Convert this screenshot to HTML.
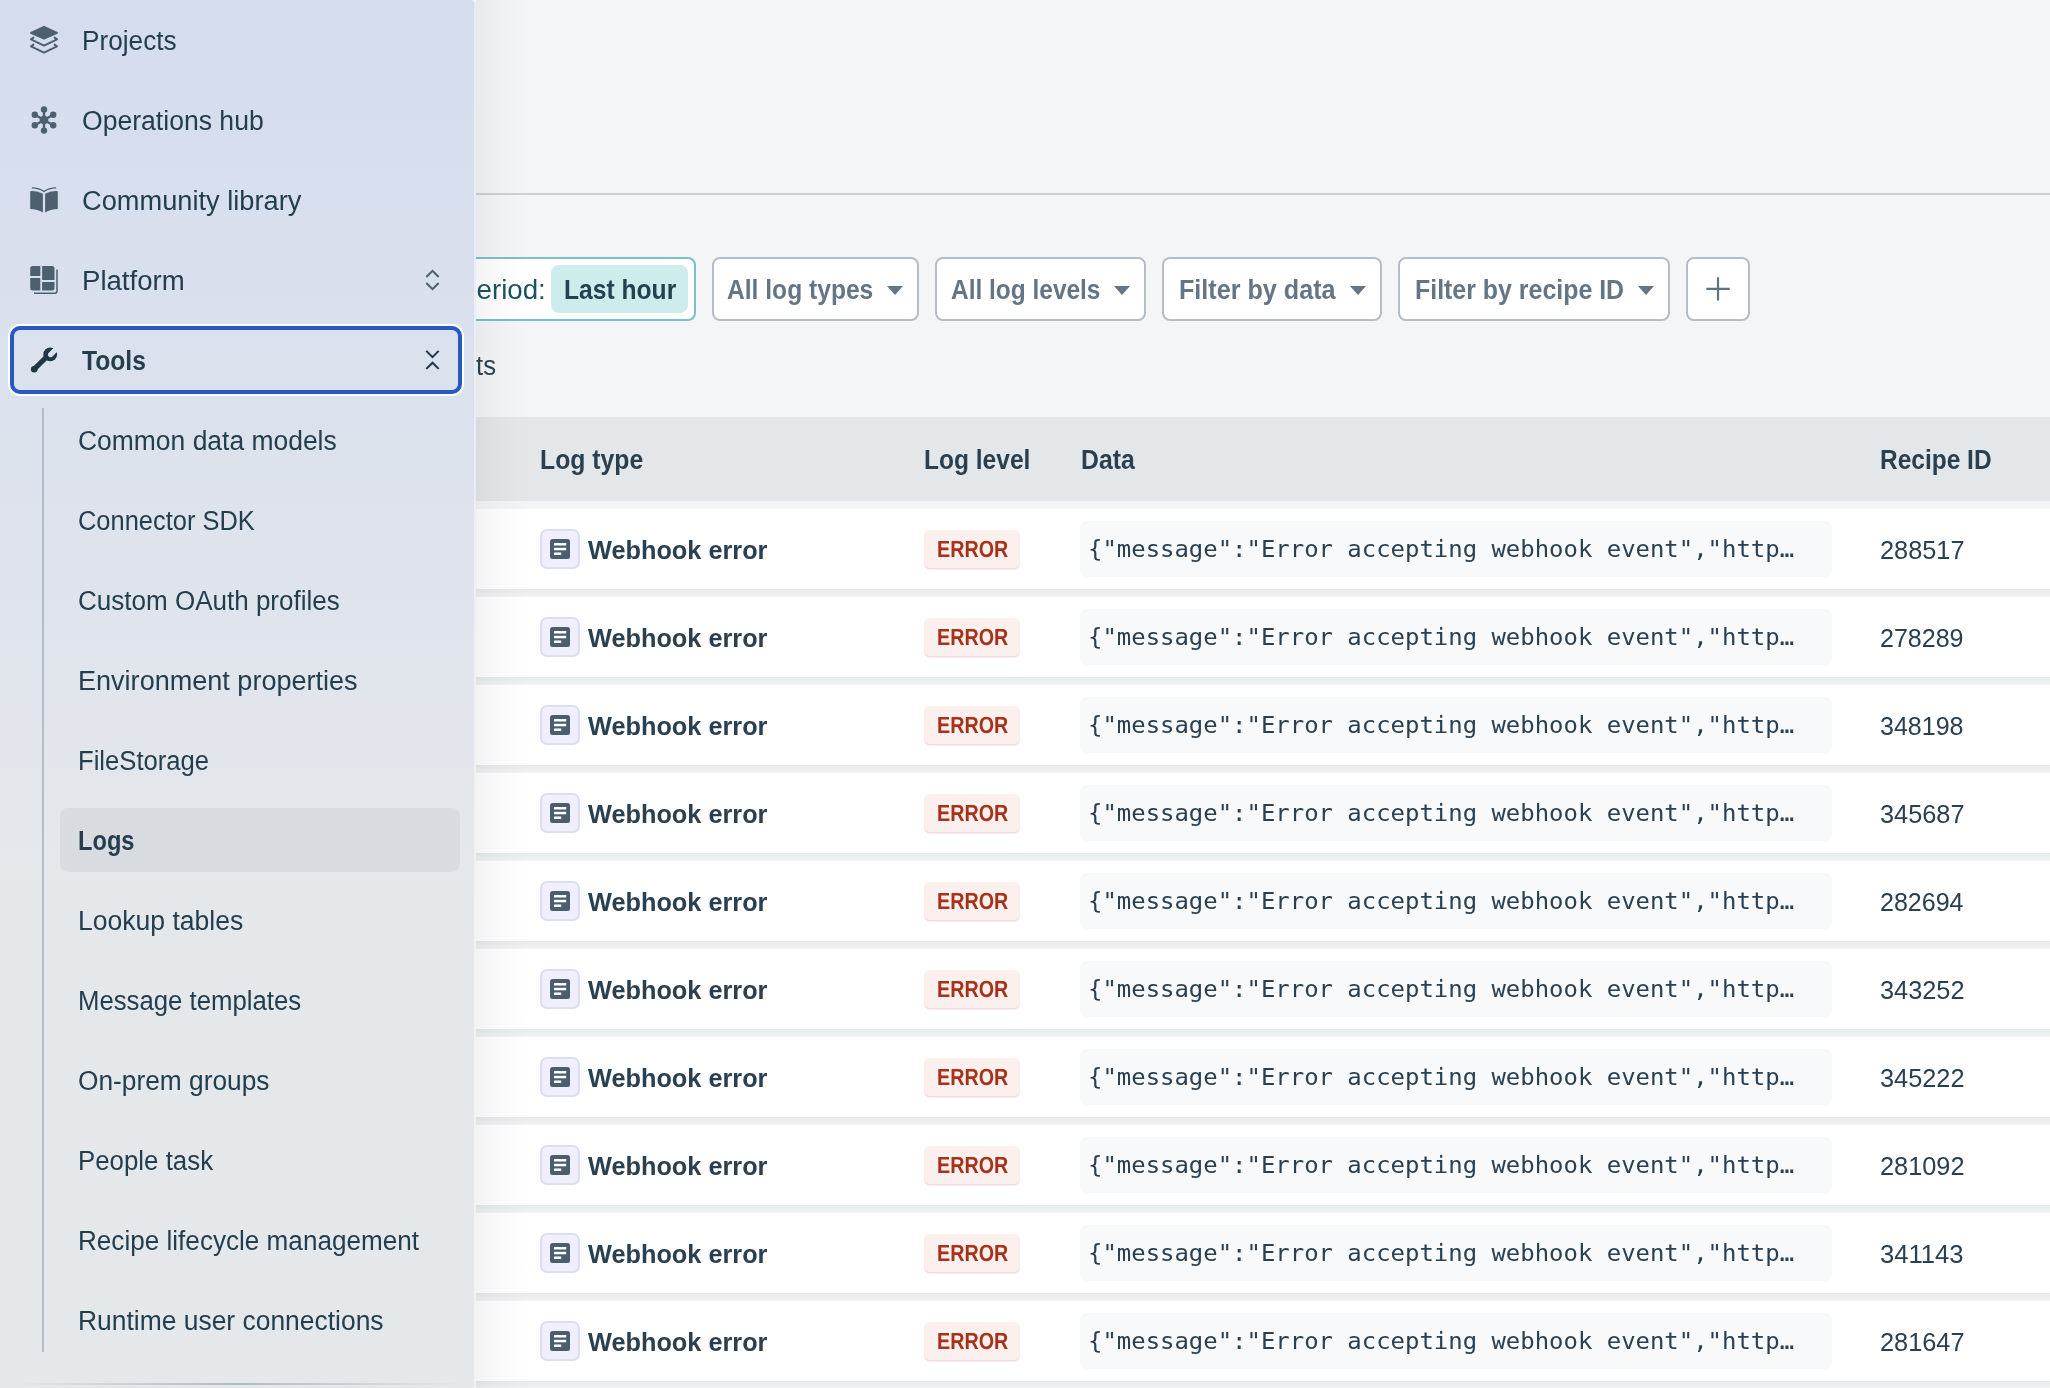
<!DOCTYPE html>
<html lang="en">
<head>
<meta charset="utf-8">
<title>Logs</title>
<style>
*{box-sizing:border-box}
html,body{margin:0;padding:0}
body{width:2050px;height:1388px;overflow:hidden;position:relative;background:#f4f5f7;font-family:'Liberation Sans',sans-serif}
.t{position:absolute;line-height:1;white-space:pre;transform-origin:0 0;display:block}
#main{position:absolute;left:0;top:0;width:2050px;height:1388px;overflow:hidden}
#hline{position:absolute;left:476px;top:193px;width:1574px;height:2px;background:#cbd1d7}
.box{position:absolute;top:257px;height:64px;border:2px solid #b4bec8;border-radius:8px;background:#fff}
#period{left:300px;width:396px;border-color:#7bc1c6}
#chip{position:absolute;left:551px;top:265px;width:137px;height:48px;border-radius:8px;background:#cdecec}
.caret{position:absolute;top:286px;width:0;height:0;border-left:8.5px solid transparent;border-right:8.5px solid transparent;border-top:9px solid #647686}
#thead{position:absolute;left:476px;top:417px;width:1574px;height:84px;background:#e4e7ea;border-bottom:1px solid #e1e5e8}
.row{position:absolute;left:476px;width:1574px;height:80px;background:#fff}
.row:after{content:"";position:absolute;left:0;top:80px;width:100%;height:8px;background:linear-gradient(#e7eaeb,#f1f3f4)}
.ib{position:absolute;left:64px;top:20px;width:40px;height:40px;border:2px solid #dddef2;border-radius:7px;background:#efeffd}
.ib svg{position:absolute;left:8px;top:8px}
.badge{position:absolute;left:448px;top:21px;width:96px;height:38px;border-radius:6px;background:#fcf0ee;box-shadow:0 1.5px 0 #efdddb}
.code{position:absolute;left:604px;top:12px;width:752px;height:56px;border-radius:8px;background:#f7f9fb}
#shade{position:absolute;left:476px;top:0;width:56px;height:1388px;background:linear-gradient(to right,rgba(25,35,30,.055) 0,rgba(25,35,30,.04) 10px,rgba(25,35,30,.02) 26px,rgba(25,35,30,.006) 42px,rgba(25,35,30,0) 56px)}
#sidebar{position:absolute;left:0;top:0;width:476px;height:1388px;background:linear-gradient(180deg,#d4dcee 0,#e5e8eb 900px);border-right:2px solid rgba(255,255,255,.42);border-top-right-radius:5px;overflow:hidden}
#focus{position:absolute;left:10px;top:326px;width:452px;height:68px;border:4px solid #2759c4;border-radius:10px;box-shadow:0 0 0 2px #fff}
#vline{position:absolute;left:42px;top:408px;width:2px;height:944px;background:#b3bcc8}
#logsel{position:absolute;left:60px;top:808px;width:400px;height:64px;border-radius:8px;background:#d8dbe0}
#bline{position:absolute;left:10px;top:1383px;width:454px;height:2px;background:linear-gradient(to right,rgba(176,186,196,0),rgba(176,186,196,1) 50%,rgba(176,186,196,0))}
#icons{position:absolute;left:0;top:0}
</style>
</head>
<body>
<div id="main">
<div id="hline"></div>
<div class="box" id="period"></div>
<div id="chip"></div>
<div class="box" style="left:712px;width:207px"></div><div class="caret" style="left:886.5px"></div>
<div class="box" style="left:935px;width:211px"></div><div class="caret" style="left:1113.5px"></div>
<div class="box" style="left:1162px;width:220px"></div><div class="caret" style="left:1349.5px"></div>
<div class="box" style="left:1398px;width:272px"></div><div class="caret" style="left:1637.5px"></div>
<div class="box" style="left:1686px;width:64px"><svg width="60" height="60" viewBox="0 0 60 60" style="position:absolute;left:0;top:0"><path d="M30 18.2V41.6M18.3 29.9H41.7" stroke="#5f7282" stroke-width="2.2" fill="none"/></svg></div>
<div id="thead"></div>
<div class="row" style="top:509px"><div class="ib"><svg width="20" height="20" viewBox="0 0 20 20"><rect width="20" height="20" rx="2.5" fill="#4b5e70"/><rect x="4" y="4" width="12.2" height="2.5" fill="#fff"/><rect x="4" y="8.8" width="12.2" height="2.5" fill="#fff"/><rect x="4" y="13.5" width="7.2" height="2.5" fill="#fff"/></svg></div><div class="badge"></div><div class="code"></div></div>
<div class="row" style="top:597px"><div class="ib"><svg width="20" height="20" viewBox="0 0 20 20"><rect width="20" height="20" rx="2.5" fill="#4b5e70"/><rect x="4" y="4" width="12.2" height="2.5" fill="#fff"/><rect x="4" y="8.8" width="12.2" height="2.5" fill="#fff"/><rect x="4" y="13.5" width="7.2" height="2.5" fill="#fff"/></svg></div><div class="badge"></div><div class="code"></div></div>
<div class="row" style="top:685px"><div class="ib"><svg width="20" height="20" viewBox="0 0 20 20"><rect width="20" height="20" rx="2.5" fill="#4b5e70"/><rect x="4" y="4" width="12.2" height="2.5" fill="#fff"/><rect x="4" y="8.8" width="12.2" height="2.5" fill="#fff"/><rect x="4" y="13.5" width="7.2" height="2.5" fill="#fff"/></svg></div><div class="badge"></div><div class="code"></div></div>
<div class="row" style="top:773px"><div class="ib"><svg width="20" height="20" viewBox="0 0 20 20"><rect width="20" height="20" rx="2.5" fill="#4b5e70"/><rect x="4" y="4" width="12.2" height="2.5" fill="#fff"/><rect x="4" y="8.8" width="12.2" height="2.5" fill="#fff"/><rect x="4" y="13.5" width="7.2" height="2.5" fill="#fff"/></svg></div><div class="badge"></div><div class="code"></div></div>
<div class="row" style="top:861px"><div class="ib"><svg width="20" height="20" viewBox="0 0 20 20"><rect width="20" height="20" rx="2.5" fill="#4b5e70"/><rect x="4" y="4" width="12.2" height="2.5" fill="#fff"/><rect x="4" y="8.8" width="12.2" height="2.5" fill="#fff"/><rect x="4" y="13.5" width="7.2" height="2.5" fill="#fff"/></svg></div><div class="badge"></div><div class="code"></div></div>
<div class="row" style="top:949px"><div class="ib"><svg width="20" height="20" viewBox="0 0 20 20"><rect width="20" height="20" rx="2.5" fill="#4b5e70"/><rect x="4" y="4" width="12.2" height="2.5" fill="#fff"/><rect x="4" y="8.8" width="12.2" height="2.5" fill="#fff"/><rect x="4" y="13.5" width="7.2" height="2.5" fill="#fff"/></svg></div><div class="badge"></div><div class="code"></div></div>
<div class="row" style="top:1037px"><div class="ib"><svg width="20" height="20" viewBox="0 0 20 20"><rect width="20" height="20" rx="2.5" fill="#4b5e70"/><rect x="4" y="4" width="12.2" height="2.5" fill="#fff"/><rect x="4" y="8.8" width="12.2" height="2.5" fill="#fff"/><rect x="4" y="13.5" width="7.2" height="2.5" fill="#fff"/></svg></div><div class="badge"></div><div class="code"></div></div>
<div class="row" style="top:1125px"><div class="ib"><svg width="20" height="20" viewBox="0 0 20 20"><rect width="20" height="20" rx="2.5" fill="#4b5e70"/><rect x="4" y="4" width="12.2" height="2.5" fill="#fff"/><rect x="4" y="8.8" width="12.2" height="2.5" fill="#fff"/><rect x="4" y="13.5" width="7.2" height="2.5" fill="#fff"/></svg></div><div class="badge"></div><div class="code"></div></div>
<div class="row" style="top:1213px"><div class="ib"><svg width="20" height="20" viewBox="0 0 20 20"><rect width="20" height="20" rx="2.5" fill="#4b5e70"/><rect x="4" y="4" width="12.2" height="2.5" fill="#fff"/><rect x="4" y="8.8" width="12.2" height="2.5" fill="#fff"/><rect x="4" y="13.5" width="7.2" height="2.5" fill="#fff"/></svg></div><div class="badge"></div><div class="code"></div></div>
<div class="row" style="top:1301px"><div class="ib"><svg width="20" height="20" viewBox="0 0 20 20"><rect width="20" height="20" rx="2.5" fill="#4b5e70"/><rect x="4" y="4" width="12.2" height="2.5" fill="#fff"/><rect x="4" y="8.8" width="12.2" height="2.5" fill="#fff"/><rect x="4" y="13.5" width="7.2" height="2.5" fill="#fff"/></svg></div><div class="badge"></div><div class="code"></div></div>
<span class="t" style="left:458.10px;top:277px;font-size:27px;color:#1b5360;transform:scaleX(1.0266)">Period:</span>
<span class="t" style="left:563.78px;top:277px;font-size:27px;color:#25404f;transform:scaleX(0.9124);font-weight:700">Last hour</span>
<span class="t" style="left:726.69px;top:277px;font-size:27px;color:#647686;transform:scaleX(0.9114);font-weight:700">All log types</span>
<span class="t" style="left:950.99px;top:277px;font-size:27px;color:#647686;transform:scaleX(0.9055);font-weight:700">All log levels</span>
<span class="t" style="left:1179.14px;top:277px;font-size:27px;color:#647686;transform:scaleX(0.9313);font-weight:700">Filter by data</span>
<span class="t" style="left:1414.75px;top:277px;font-size:27px;color:#647686;transform:scaleX(0.9229);font-weight:700">Filter by recipe ID</span>
<span class="t" style="left:476.20px;top:353px;font-size:27px;color:#2a4352;transform:scaleX(0.9500)">ts</span>
<span class="t" style="left:540.37px;top:447px;font-size:27px;color:#2a4050;transform:scaleX(0.9173);font-weight:700">Log type</span>
<span class="t" style="left:924.48px;top:447px;font-size:27px;color:#2a4050;transform:scaleX(0.9088);font-weight:700">Log level</span>
<span class="t" style="left:1080.56px;top:447px;font-size:27px;color:#2a4050;transform:scaleX(0.9175);font-weight:700">Data</span>
<span class="t" style="left:1880.39px;top:447px;font-size:27px;color:#2a4050;transform:scaleX(0.9067);font-weight:700">Recipe ID</span>
<span class="t" style="left:587.90px;top:537px;font-size:26px;color:#2a4050;transform:scaleX(0.9728);font-weight:700">Webhook error</span>
<span class="t" style="left:937.21px;top:538px;font-size:23.4px;color:#a8311a;transform:scaleX(0.8439);text-rendering:geometricPrecision;font-weight:700">ERROR</span>
<span class="t" style="left:1087.68px;top:538px;font-size:23px;color:#2a4050;transform:scaleX(1.0406);font-family:'DejaVu Sans Mono','Liberation Mono',monospace">{"message":"Error accepting webhook event","http…</span>
<span class="t" style="left:1879.63px;top:537px;font-size:26px;color:#2a4050;transform:scaleX(0.9738)">288517</span>
<span class="t" style="left:587.90px;top:625px;font-size:26px;color:#2a4050;transform:scaleX(0.9728);font-weight:700">Webhook error</span>
<span class="t" style="left:937.21px;top:626px;font-size:23.4px;color:#a8311a;transform:scaleX(0.8439);text-rendering:geometricPrecision;font-weight:700">ERROR</span>
<span class="t" style="left:1087.68px;top:626px;font-size:23px;color:#2a4050;transform:scaleX(1.0406);font-family:'DejaVu Sans Mono','Liberation Mono',monospace">{"message":"Error accepting webhook event","http…</span>
<span class="t" style="left:1879.64px;top:625px;font-size:26px;color:#2a4050;transform:scaleX(0.9624)">278289</span>
<span class="t" style="left:587.90px;top:713px;font-size:26px;color:#2a4050;transform:scaleX(0.9728);font-weight:700">Webhook error</span>
<span class="t" style="left:937.21px;top:714px;font-size:23.4px;color:#a8311a;transform:scaleX(0.8439);text-rendering:geometricPrecision;font-weight:700">ERROR</span>
<span class="t" style="left:1087.68px;top:714px;font-size:23px;color:#2a4050;transform:scaleX(1.0406);font-family:'DejaVu Sans Mono','Liberation Mono',monospace">{"message":"Error accepting webhook event","http…</span>
<span class="t" style="left:1879.64px;top:713px;font-size:26px;color:#2a4050;transform:scaleX(0.9624)">348198</span>
<span class="t" style="left:587.90px;top:801px;font-size:26px;color:#2a4050;transform:scaleX(0.9728);font-weight:700">Webhook error</span>
<span class="t" style="left:937.21px;top:802px;font-size:23.4px;color:#a8311a;transform:scaleX(0.8439);text-rendering:geometricPrecision;font-weight:700">ERROR</span>
<span class="t" style="left:1087.68px;top:802px;font-size:23px;color:#2a4050;transform:scaleX(1.0406);font-family:'DejaVu Sans Mono','Liberation Mono',monospace">{"message":"Error accepting webhook event","http…</span>
<span class="t" style="left:1879.63px;top:801px;font-size:26px;color:#2a4050;transform:scaleX(0.9738)">345687</span>
<span class="t" style="left:587.90px;top:889px;font-size:26px;color:#2a4050;transform:scaleX(0.9728);font-weight:700">Webhook error</span>
<span class="t" style="left:937.21px;top:890px;font-size:23.4px;color:#a8311a;transform:scaleX(0.8439);text-rendering:geometricPrecision;font-weight:700">ERROR</span>
<span class="t" style="left:1087.68px;top:890px;font-size:23px;color:#2a4050;transform:scaleX(1.0406);font-family:'DejaVu Sans Mono','Liberation Mono',monospace">{"message":"Error accepting webhook event","http…</span>
<span class="t" style="left:1879.64px;top:889px;font-size:26px;color:#2a4050;transform:scaleX(0.9624)">282694</span>
<span class="t" style="left:587.90px;top:977px;font-size:26px;color:#2a4050;transform:scaleX(0.9728);font-weight:700">Webhook error</span>
<span class="t" style="left:937.21px;top:978px;font-size:23.4px;color:#a8311a;transform:scaleX(0.8439);text-rendering:geometricPrecision;font-weight:700">ERROR</span>
<span class="t" style="left:1087.68px;top:978px;font-size:23px;color:#2a4050;transform:scaleX(1.0406);font-family:'DejaVu Sans Mono','Liberation Mono',monospace">{"message":"Error accepting webhook event","http…</span>
<span class="t" style="left:1879.63px;top:977px;font-size:26px;color:#2a4050;transform:scaleX(0.9738)">343252</span>
<span class="t" style="left:587.90px;top:1065px;font-size:26px;color:#2a4050;transform:scaleX(0.9728);font-weight:700">Webhook error</span>
<span class="t" style="left:937.21px;top:1066px;font-size:23.4px;color:#a8311a;transform:scaleX(0.8439);text-rendering:geometricPrecision;font-weight:700">ERROR</span>
<span class="t" style="left:1087.68px;top:1066px;font-size:23px;color:#2a4050;transform:scaleX(1.0406);font-family:'DejaVu Sans Mono','Liberation Mono',monospace">{"message":"Error accepting webhook event","http…</span>
<span class="t" style="left:1879.63px;top:1065px;font-size:26px;color:#2a4050;transform:scaleX(0.9738)">345222</span>
<span class="t" style="left:587.90px;top:1153px;font-size:26px;color:#2a4050;transform:scaleX(0.9728);font-weight:700">Webhook error</span>
<span class="t" style="left:937.21px;top:1154px;font-size:23.4px;color:#a8311a;transform:scaleX(0.8439);text-rendering:geometricPrecision;font-weight:700">ERROR</span>
<span class="t" style="left:1087.68px;top:1154px;font-size:23px;color:#2a4050;transform:scaleX(1.0406);font-family:'DejaVu Sans Mono','Liberation Mono',monospace">{"message":"Error accepting webhook event","http…</span>
<span class="t" style="left:1879.63px;top:1153px;font-size:26px;color:#2a4050;transform:scaleX(0.9738)">281092</span>
<span class="t" style="left:587.90px;top:1241px;font-size:26px;color:#2a4050;transform:scaleX(0.9728);font-weight:700">Webhook error</span>
<span class="t" style="left:937.21px;top:1242px;font-size:23.4px;color:#a8311a;transform:scaleX(0.8439);text-rendering:geometricPrecision;font-weight:700">ERROR</span>
<span class="t" style="left:1087.68px;top:1242px;font-size:23px;color:#2a4050;transform:scaleX(1.0406);font-family:'DejaVu Sans Mono','Liberation Mono',monospace">{"message":"Error accepting webhook event","http…</span>
<span class="t" style="left:1879.61px;top:1241px;font-size:26px;color:#2a4050;transform:scaleX(0.9855)">341143</span>
<span class="t" style="left:587.90px;top:1329px;font-size:26px;color:#2a4050;transform:scaleX(0.9728);font-weight:700">Webhook error</span>
<span class="t" style="left:937.21px;top:1330px;font-size:23.4px;color:#a8311a;transform:scaleX(0.8439);text-rendering:geometricPrecision;font-weight:700">ERROR</span>
<span class="t" style="left:1087.68px;top:1330px;font-size:23px;color:#2a4050;transform:scaleX(1.0406);font-family:'DejaVu Sans Mono','Liberation Mono',monospace">{"message":"Error accepting webhook event","http…</span>
<span class="t" style="left:1879.63px;top:1329px;font-size:26px;color:#2a4050;transform:scaleX(0.9738)">281647</span>

<div id="shade"></div>
</div>
<div id="sidebar">
<div id="focus"></div>
<div id="vline"></div>
<div id="logsel"></div>
<div id="bline"></div>
<svg id="icons" width="474" height="420" viewBox="0 0 474 420">
<!-- projects -->
<g fill="none" stroke="#4c6070" stroke-linejoin="round" stroke-linecap="round">
<path d="M44 27 L57 32.8 L44 38.6 L31 32.8 Z" fill="#4c6070" stroke-width="2"/>
<path d="M33.4 37.6 L31 39.4 L44 45.6 L57 39.4 L54.6 37.6" stroke-width="2"/>
<path d="M33.4 44.6 L31 46.4 L44 52.6 L57 46.4 L54.6 44.6" stroke-width="2"/>
</g>
<!-- operations hub -->
<g fill="#4c6070" stroke="#4c6070" stroke-width="2">
<path d="M44 109.5V130.5M34.9 114.75L53.1 125.25M34.9 125.25L53.1 114.75" fill="none" stroke-width="2.4"/>
<circle cx="44" cy="120" r="4.4" stroke="none"/>
<circle cx="44" cy="109.4" r="3.2" stroke="none"/><circle cx="44" cy="130.6" r="3.2" stroke="none"/>
<circle cx="34.8" cy="114.7" r="3.2" stroke="none"/><circle cx="53.2" cy="114.7" r="3.2" stroke="none"/>
<circle cx="34.8" cy="125.3" r="3.2" stroke="none"/><circle cx="53.2" cy="125.3" r="3.2" stroke="none"/>
</g>
<!-- community library -->
<g fill="#4c6070">
<path d="M30.2 191.2 Q37.5 190.6 42.9 193.8 V212.6 Q37.5 209.2 30.2 209 Z"/>
<path d="M57.8 191.2 Q50.5 190.6 45.1 193.8 V212.6 Q50.5 209.2 57.8 209 Z"/>
<path d="M31.8 187.8 Q39.5 187.8 44 191.6 Q48.5 187.8 56.2 187.8" fill="none" stroke="#4c6070" stroke-width="1.3"/>
</g>
<!-- platform -->
<g fill="#4c6070">
<path d="M32.7 266 H40.3 V276 H30.2 V268.5 Q30.2 266 32.7 266 Z"/>
<path d="M42.1 266 H52 Q54.5 266 54.5 268.5 V280 H42.1 Z"/>
<path d="M30.2 278 H40.3 V290.6 H32.7 Q30.2 290.6 30.2 288.1 Z"/>
<path d="M42.1 282 H54.5 V288.1 Q54.5 290.6 52 290.6 H42.1 Z"/>
<path d="M57 269.6 V291 Q57 293.2 54.8 293.2 H34" fill="none" stroke="#4c6070" stroke-width="1.5"/>
</g>
<!-- chevrons platform -->
<g fill="none" stroke="#4b5e6c" stroke-width="2">
<path d="M426.3 277 L432.5 270.8 L438.7 277"/>
<path d="M426.3 283 L432.5 289.2 L438.7 283"/>
</g>
<!-- wrench -->
<defs><mask id="wm"><rect x="20" y="340" width="50" height="40" fill="#fff"/><path d="M50.6 354.6 L60 345.2" stroke="#000" stroke-width="5.2" stroke-linecap="round"/></mask></defs>
<g mask="url(#wm)" fill="#1f3645" stroke="#1f3645">
<circle cx="50.2" cy="354.4" r="6.9" stroke="none"/>
<path d="M34.4 369 L47.5 356" stroke-width="5.2" stroke-linecap="round" fill="none"/>
<circle cx="34.2" cy="369.2" r="3.3" stroke="none"/>
</g>
<!-- chevrons tools -->
<g fill="none" stroke="#1f3645" stroke-width="2">
<path d="M426.3 350.9 L432.5 357.1 L438.7 350.9"/>
<path d="M426.3 368.9 L432.5 362.7 L438.7 368.9"/>
</g>
</svg>
<span class="t" style="left:82.00px;top:28px;font-size:27px;color:#233e4e;transform:scaleX(0.9701)">Projects</span>
<span class="t" style="left:82.00px;top:108px;font-size:27px;color:#233e4e;transform:scaleX(0.9842)">Operations hub</span>
<span class="t" style="left:82.00px;top:188px;font-size:27px;color:#233e4e;transform:scaleX(1.0083)">Community library</span>
<span class="t" style="left:82.00px;top:268px;font-size:27px;color:#233e4e;transform:scaleX(1.0212)">Platform</span>
<span class="t" style="left:82.00px;top:348px;font-size:27px;color:#253d4d;transform:scaleX(0.9130);font-weight:700">Tools</span>
<span class="t" style="left:78.00px;top:428px;font-size:27px;color:#233e4e;transform:scaleX(0.9795)">Common data models</span>
<span class="t" style="left:78.00px;top:508px;font-size:27px;color:#233e4e;transform:scaleX(0.9422)">Connector SDK</span>
<span class="t" style="left:78.00px;top:588px;font-size:27px;color:#233e4e;transform:scaleX(0.9638)">Custom OAuth profiles</span>
<span class="t" style="left:78.00px;top:668px;font-size:27px;color:#233e4e;transform:scaleX(1.0018)">Environment properties</span>
<span class="t" style="left:78.00px;top:748px;font-size:27px;color:#233e4e;transform:scaleX(0.9496)">FileStorage</span>
<span class="t" style="left:78.00px;top:828px;font-size:27px;color:#253d4d;transform:scaleX(0.8762);font-weight:700">Logs</span>
<span class="t" style="left:78.00px;top:908px;font-size:27px;color:#233e4e;transform:scaleX(0.9832)">Lookup tables</span>
<span class="t" style="left:78.00px;top:988px;font-size:27px;color:#233e4e;transform:scaleX(0.9528)">Message templates</span>
<span class="t" style="left:78.00px;top:1068px;font-size:27px;color:#233e4e;transform:scaleX(0.9740)">On-prem groups</span>
<span class="t" style="left:78.00px;top:1148px;font-size:27px;color:#233e4e;transform:scaleX(0.9574)">People task</span>
<span class="t" style="left:78.00px;top:1228px;font-size:27px;color:#233e4e;transform:scaleX(0.9669)">Recipe lifecycle management</span>
<span class="t" style="left:78.00px;top:1308px;font-size:27px;color:#233e4e;transform:scaleX(0.9788)">Runtime user connections</span>

</div>
</body>
</html>
